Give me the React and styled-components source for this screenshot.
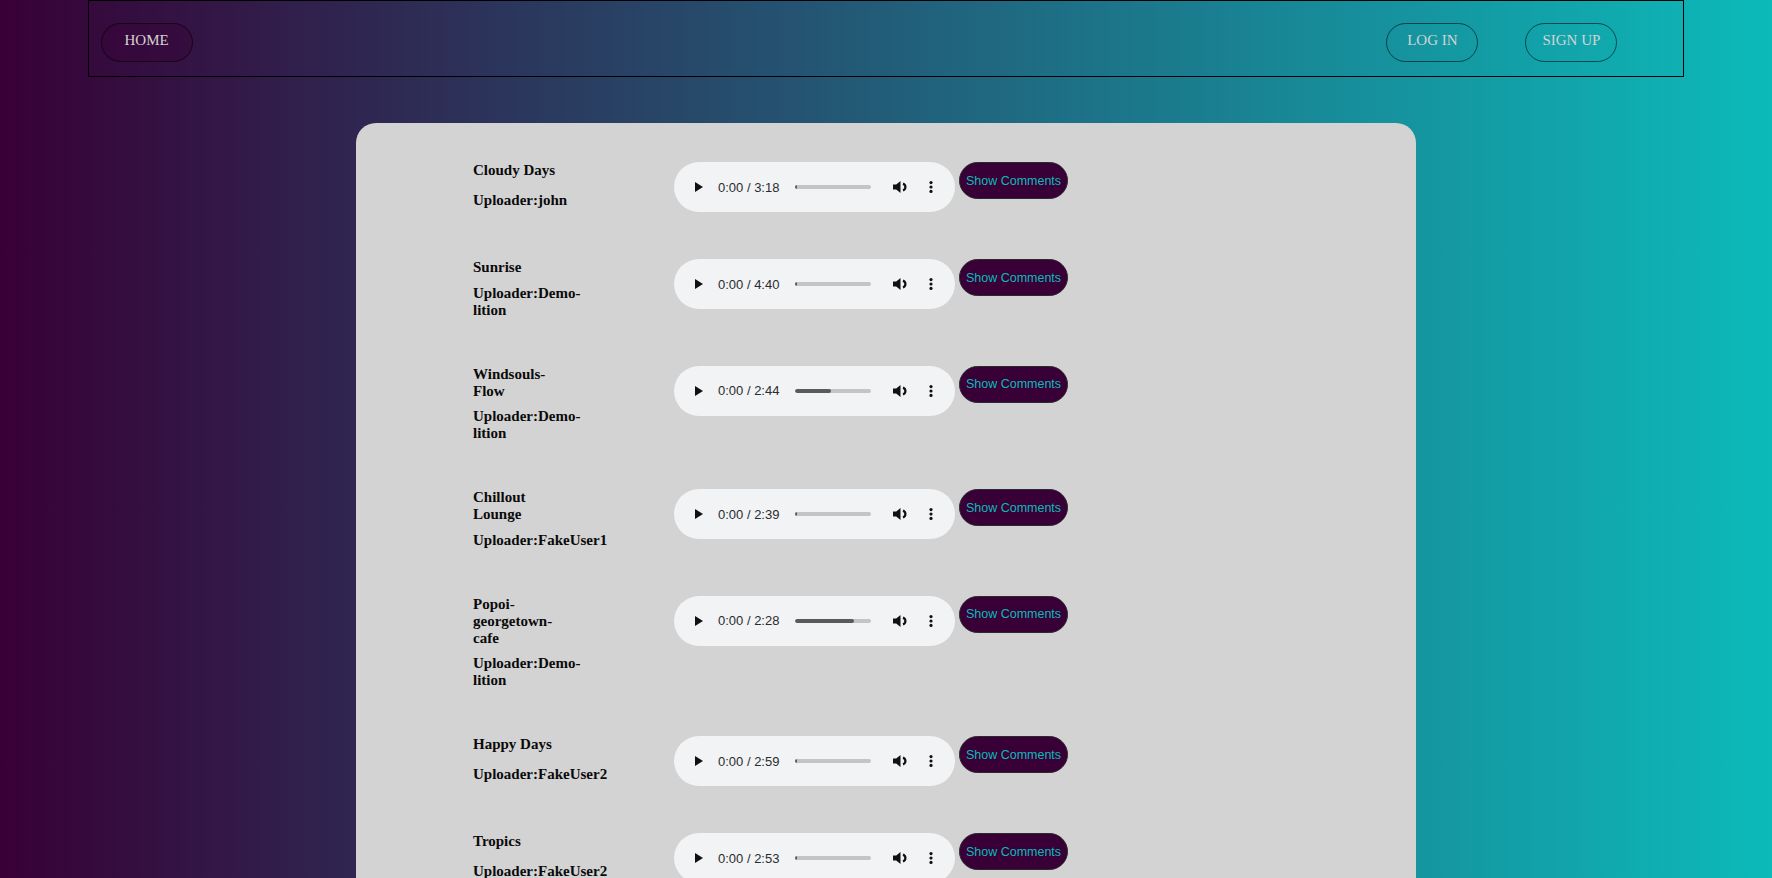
import React from 'react';
import styled, { createGlobalStyle } from 'styled-components';

const GlobalStyle = createGlobalStyle`
  html, body {
    margin: 0;
    padding: 0;
    height: 100%;
    overflow: hidden;
  }

  body {
    font-family: "Liberation Serif", "Times New Roman", serif;
  }
`;

const StyledPage = styled.div`
  min-height: 100vh;
  background: linear-gradient(to right, #380036 0%, #0cbaba 100%);
`;

const StyledNav = styled.nav`
  box-sizing: border-box;
  width: calc(90% + 2px);
  height: 77px;
  margin: 0 auto;
  padding: 22px 66px 0 12px;
  border: 1px solid #000;
  display: flex;
  align-items: flex-start;
`;

const NavGroup = styled.div`
  margin-left: auto;
  display: flex;
  gap: 47px;
`;

const NavButton = styled.button`
  box-sizing: border-box;
  width: 92px;
  height: 39px;
  padding: 0 0 5px;
  border-radius: 20px;
  border: 1px solid rgba(0, 0, 0, 0.55);
  background: ${({ $active }) => ($active ? 'rgba(56, 0, 54, 0.35)' : 'transparent')};
  color: #d3d3d3;
  font-family: "Liberation Serif", "Times New Roman", serif;
  font-size: 15px;
  cursor: pointer;
`;

const StyledCard = styled.main`
  box-sizing: border-box;
  width: 1060px;
  min-height: 900px;
  margin: 46px auto 0;
  padding: 39px 0 40px 117px;
  background: #d3d3d3;
  border-radius: 20px;
`;

const Row = styled.div`
  display: flex;
  align-items: flex-start;
  margin-bottom: 47px;
`;

const Info = styled.div`
  width: 110px;
  min-height: 47px;
  margin-right: 91px;
  display: flex;
  flex-direction: column;
  justify-content: space-between;
  gap: 8.5px;
  font-family: "Liberation Serif", "Times New Roman", serif;
  font-size: 15px;
  font-weight: bold;
  line-height: 17px;
  color: #0a0a0a;
`;

const Title = styled.h4`
  max-width: 100px;
  margin: 0;
  font-size: inherit;
`;

const Uploader = styled.p`
  margin: 0;
`;

const Controls = styled.div`
  display: flex;
  align-items: flex-start;
  gap: 4px;
`;

const Player = styled.div`
  box-sizing: border-box;
  width: 281px;
  height: 50px;
  padding-left: 21px;
  border-radius: 25px;
  background: #f1f3f4;
  display: flex;
  align-items: center;
  color: #202124;
`;

const PlayIcon = styled.svg`
  width: 8px;
  height: 10px;
  margin-right: 15px;
  flex-shrink: 0;
`;

const Time = styled.span`
  width: 61px;
  margin-right: 16px;
  font-family: "Liberation Sans", Arial, sans-serif;
  font-size: 13px;
  white-space: nowrap;
  color: #2b2b30;
`;

const Track = styled.div`
  width: 76px;
  height: 4px;
  border-radius: 2px;
  background: #c4c4c4;
  margin-right: 22px;
  overflow: hidden;
`;

const Progress = styled.div`
  height: 100%;
  background: #5a5a5a;
  border-radius: 2px;
`;

const VolumeIcon = styled.svg`
  width: 15px;
  height: 14px;
  margin-right: 21px;
  flex-shrink: 0;
`;

const MoreIcon = styled.svg`
  width: 4px;
  height: 12px;
  flex-shrink: 0;
`;

const CommentsButton = styled.button`
  box-sizing: border-box;
  width: 109px;
  height: 37px;
  padding: 0;
  border-radius: 19px;
  border: 1px solid #2a2a2a;
  background: #380036;
  color: #0cbaba;
  font-family: "Liberation Sans", Arial, sans-serif;
  font-size: 12.5px;
  cursor: pointer;
`;

const tracks = [
  { title: 'Cloudy Days', uploader: 'john', length: '3:18', played: 0 },
  { title: 'Sunrise', uploader: 'Demo\u00ADlition', length: '4:40', played: 0 },
  { title: 'Windsouls-Flow', uploader: 'Demo\u00ADlition', length: '2:44', played: 48 },
  { title: 'Chillout Lounge', uploader: 'FakeUser1', length: '2:39', played: 0 },
  { title: 'Popoi-georgetown-cafe', uploader: 'Demo\u00ADlition', length: '2:28', played: 77 },
  { title: 'Happy Days', uploader: 'FakeUser2', length: '2:59', played: 0 },
  { title: 'Tropics', uploader: 'FakeUser2', length: '2:53', played: 0 },
  { title: 'Night Drive', uploader: 'john', length: '3:05', played: 0 },
];

const AudioPlayer = ({ length, played }) => (
  <Player>
    <PlayIcon viewBox="0 0 8 10">
      <path d="M0 0 L8 5 L0 10 Z" fill="#111" />
    </PlayIcon>
    <Time>0:00 / {length}</Time>
    <Track>
      <Progress style={{ width: played ? `${played}%` : '2px' }} />
    </Track>
    <VolumeIcon viewBox="0 0 15 14">
      <path d="M0 4.5h3.2L7.5 1v12L3.2 9.5H0z" fill="#111" />
      <path d="M10 3.6a3.6 3.6 0 0 1 0 6.8" stroke="#111" strokeWidth="2.2" fill="none" />
    </VolumeIcon>
    <MoreIcon viewBox="0 0 4 12">
      <circle cx="2" cy="1.6" r="1.6" fill="#111" />
      <circle cx="2" cy="6" r="1.6" fill="#111" />
      <circle cx="2" cy="10.4" r="1.6" fill="#111" />
    </MoreIcon>
  </Player>
);

const App = () => {
  return (
    <StyledPage>
      <GlobalStyle />

      <StyledNav>
        <NavButton $active>HOME</NavButton>
        <NavGroup>
          <NavButton>LOG IN</NavButton>
          <NavButton>SIGN UP</NavButton>
        </NavGroup>
      </StyledNav>

      <StyledCard>
        {tracks.map(track => (
          <Row key={track.title}>
            <Info>
              <Title>{track.title}</Title>
              <Uploader>Uploader:{track.uploader}</Uploader>
            </Info>
            <Controls>
              <AudioPlayer length={track.length} played={track.played} />
              <CommentsButton>Show Comments</CommentsButton>
            </Controls>
          </Row>
        ))}
      </StyledCard>
    </StyledPage>
  );
};

export default App;
